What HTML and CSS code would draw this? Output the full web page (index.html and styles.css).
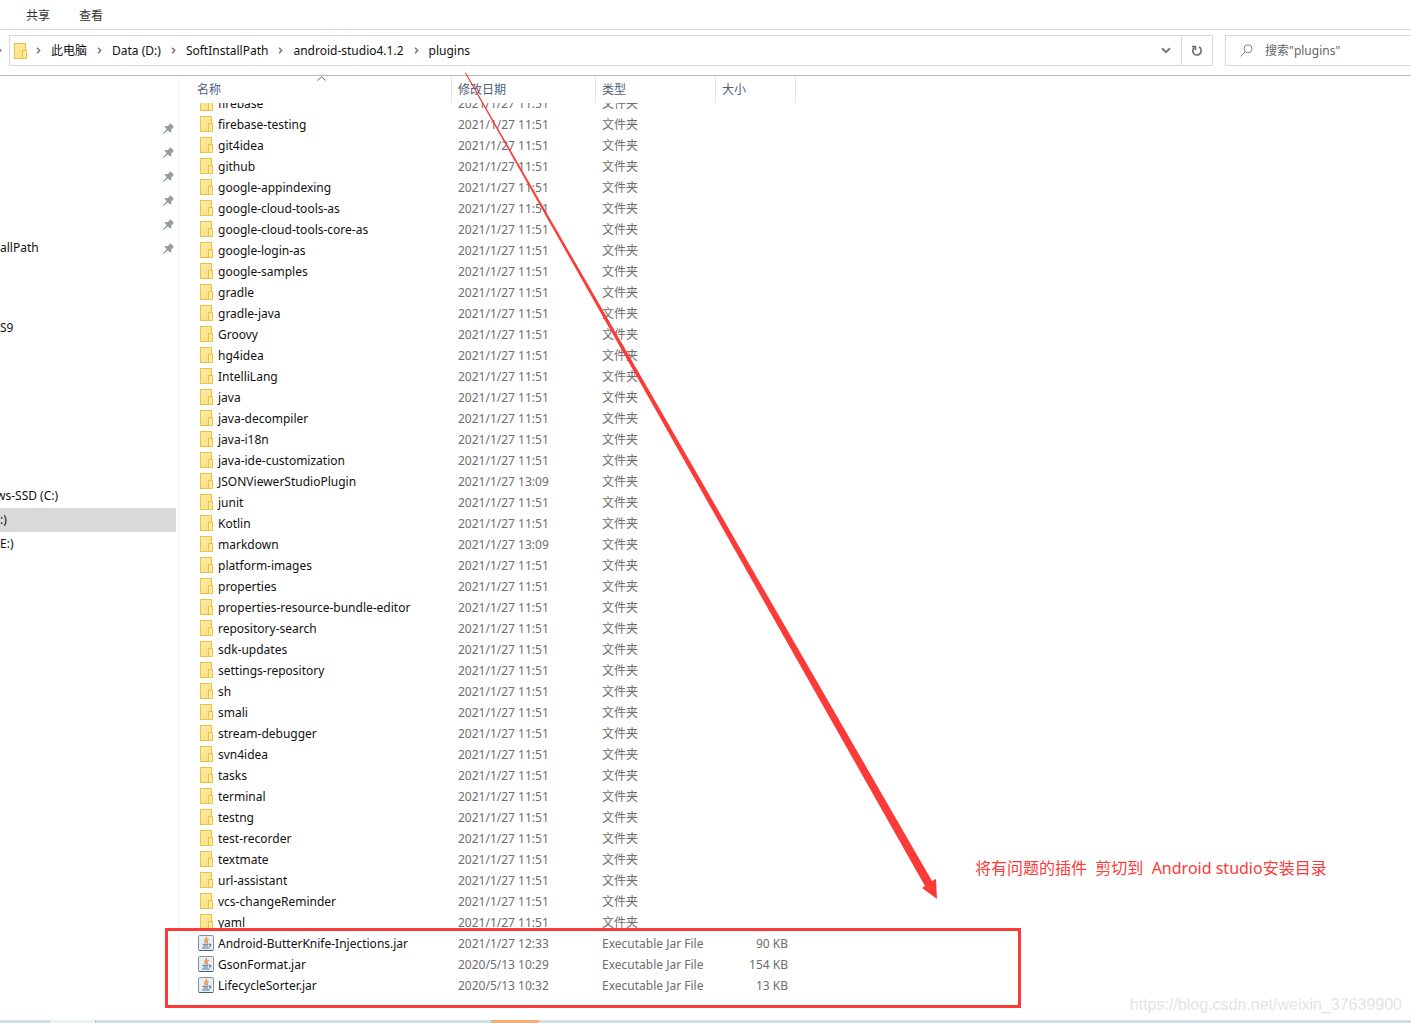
FILE: index.html
```html
<!DOCTYPE html>
<html lang="zh-CN">
<head>
<meta charset="utf-8">
<title>plugins</title>
<link rel="stylesheet" href="styles.css">
</head>
<body>
<svg class="symbols" aria-hidden="true">
  <symbol id="pin" viewBox="0 0 11 11"><path fill="#929ca5" d="M7 0 11 4 9.600 4.900 8.400 6.200 8.400 8.600 7.400 9.600 4.900 7.400 .8 10.800 0 10.900 .2 9.900 3.700 6.300 1.500 4 2.500 2.900 4.900 2.900 6.400 1.700Z"/></symbol>
  <symbol id="jar" viewBox="0 0 16 16">
    <rect x=".5" y=".5" width="15" height="15" rx="1" fill="#e9eef2" stroke="#7d93a3"/>
    <path d="M1 15.500H15" stroke="#44617a"/>
    <path d="M8.500 2c1 2-2.600 2.600-1.500 4.700.3.600.8.800.9 1.300M10.600 4.200c-1.800.9-2.200 1.500-1.400 2.600.4.600.1 1-.4 1.300" fill="none" stroke="#ee7d22" stroke-width="1.200"/>
    <path d="M4.500 9.200h6M5.300 11h4.600M4 13h7.500M11 9.200c2.300-.6 2.400 1.300.2 2.200" fill="none" stroke="#54748f" stroke-width="1.100"/>
  </symbol>
  <symbol id="chevron" viewBox="0 0 5 7"><path d="M1 .8 3.700 3.500 1 6.200" fill="none" stroke="#777" stroke-width="1.500"/></symbol>
</svg>

<nav class="tabs"><button>共享</button><button>查看</button></nav>

<div class="toolbar">
  <svg class="sep"><use href="#chevron"/></svg>
  <div class="address">
    <i class="folder"></i>
    <svg class="sep"><use href="#chevron"/></svg><a href="#">此电脑</a>
    <svg class="sep"><use href="#chevron"/></svg><a href="#">Data (D:)</a>
    <svg class="sep"><use href="#chevron"/></svg><a href="#">SoftInstallPath</a>
    <svg class="sep"><use href="#chevron"/></svg><a href="#">android-studio4.1.2</a>
    <svg class="sep"><use href="#chevron"/></svg><a href="#">plugins</a>
    <button class="history" aria-label="历史"><svg width="10" height="7" viewBox="0 0 10 7"><path d="M1 1.200 5 5.200 9 1.200" fill="none" stroke="#777" stroke-width="2"/></svg></button>
    <button class="refresh" aria-label="刷新"><svg width="12" height="12" viewBox="0 0 12 12"><path d="M3.200 2.600A4.200 4.200 0 1 0 8.600 2.500M1 1.500H4.500V5M9.800 3 8 2" fill="none" stroke="#6d6d6d" stroke-width="1.600"/></svg></button>
  </div>
  <label class="search"><svg width="13" height="13" viewBox="0 0 13 13"><path d="M5 8 .6 12.400" stroke="#888" fill="none"/><circle cx="8" cy="4.800" r="4" fill="none" stroke="#888"/></svg><input type="text" aria-label="搜索" placeholder="搜索&quot;plugins&quot;"></label>
</div>

<div class="content">
  <aside class="sidebar">
    <ul class="pinned">
      <li><svg><use href="#pin"/></svg></li>
      <li><svg><use href="#pin"/></svg></li>
      <li><svg><use href="#pin"/></svg></li>
      <li><svg><use href="#pin"/></svg></li>
      <li><svg><use href="#pin"/></svg></li>
      <li><a href="#">allPath</a><svg><use href="#pin"/></svg></li>
    </ul>
    <ul class="devices"><li><a href="#">S9</a></li></ul>
    <ul class="drives">
      <li class="cut"><a href="#">ws-SSD (C:)</a></li>
      <li class="selected"><a href="#">:)</a></li>
      <li><a href="#">E:)</a></li>
    </ul>
  </aside>
  <main class="files">
    <table class="columns">
      <thead><tr><th class="name">名称<svg class="sort" width="9" height="5" viewBox="0 0 9 5"><path d="M.5 4.500 4.500 .8 8.500 4.500" fill="none" stroke="#666"/></svg></th><th class="date">修改日期</th><th class="type">类型</th><th class="size">大小</th></tr></thead>
    </table>
    <div class="scroll">
    <table class="rows">
      <tbody>
        <tr><td class="name"><i class="folder"></i>firebase</td><td class="date">2021/1/27 11:51</td><td class="type">文件夹</td><td class="size"></td></tr>
        <tr><td><i class="folder"></i>firebase-testing</td><td>2021/1/27 11:51</td><td>文件夹</td><td></td></tr>
        <tr><td><i class="folder"></i>git4idea</td><td>2021/1/27 11:51</td><td>文件夹</td><td></td></tr>
        <tr><td><i class="folder"></i>github</td><td>2021/1/27 11:51</td><td>文件夹</td><td></td></tr>
        <tr><td><i class="folder"></i>google-appindexing</td><td>2021/1/27 11:51</td><td>文件夹</td><td></td></tr>
        <tr><td><i class="folder"></i>google-cloud-tools-as</td><td>2021/1/27 11:51</td><td>文件夹</td><td></td></tr>
        <tr><td><i class="folder"></i>google-cloud-tools-core-as</td><td>2021/1/27 11:51</td><td>文件夹</td><td></td></tr>
        <tr><td><i class="folder"></i>google-login-as</td><td>2021/1/27 11:51</td><td>文件夹</td><td></td></tr>
        <tr><td><i class="folder"></i>google-samples</td><td>2021/1/27 11:51</td><td>文件夹</td><td></td></tr>
        <tr><td><i class="folder"></i>gradle</td><td>2021/1/27 11:51</td><td>文件夹</td><td></td></tr>
        <tr><td><i class="folder"></i>gradle-java</td><td>2021/1/27 11:51</td><td>文件夹</td><td></td></tr>
        <tr><td><i class="folder"></i>Groovy</td><td>2021/1/27 11:51</td><td>文件夹</td><td></td></tr>
        <tr><td><i class="folder"></i>hg4idea</td><td>2021/1/27 11:51</td><td>文件夹</td><td></td></tr>
        <tr><td><i class="folder"></i>IntelliLang</td><td>2021/1/27 11:51</td><td>文件夹</td><td></td></tr>
        <tr><td><i class="folder"></i>java</td><td>2021/1/27 11:51</td><td>文件夹</td><td></td></tr>
        <tr><td><i class="folder"></i>java-decompiler</td><td>2021/1/27 11:51</td><td>文件夹</td><td></td></tr>
        <tr><td><i class="folder"></i>java-i18n</td><td>2021/1/27 11:51</td><td>文件夹</td><td></td></tr>
        <tr><td><i class="folder"></i>java-ide-customization</td><td>2021/1/27 11:51</td><td>文件夹</td><td></td></tr>
        <tr><td><i class="folder"></i>JSONViewerStudioPlugin</td><td>2021/1/27 13:09</td><td>文件夹</td><td></td></tr>
        <tr><td><i class="folder"></i>junit</td><td>2021/1/27 11:51</td><td>文件夹</td><td></td></tr>
        <tr><td><i class="folder"></i>Kotlin</td><td>2021/1/27 11:51</td><td>文件夹</td><td></td></tr>
        <tr><td><i class="folder"></i>markdown</td><td>2021/1/27 13:09</td><td>文件夹</td><td></td></tr>
        <tr><td><i class="folder"></i>platform-images</td><td>2021/1/27 11:51</td><td>文件夹</td><td></td></tr>
        <tr><td><i class="folder"></i>properties</td><td>2021/1/27 11:51</td><td>文件夹</td><td></td></tr>
        <tr><td><i class="folder"></i>properties-resource-bundle-editor</td><td>2021/1/27 11:51</td><td>文件夹</td><td></td></tr>
        <tr><td><i class="folder"></i>repository-search</td><td>2021/1/27 11:51</td><td>文件夹</td><td></td></tr>
        <tr><td><i class="folder"></i>sdk-updates</td><td>2021/1/27 11:51</td><td>文件夹</td><td></td></tr>
        <tr><td><i class="folder"></i>settings-repository</td><td>2021/1/27 11:51</td><td>文件夹</td><td></td></tr>
        <tr><td><i class="folder"></i>sh</td><td>2021/1/27 11:51</td><td>文件夹</td><td></td></tr>
        <tr><td><i class="folder"></i>smali</td><td>2021/1/27 11:51</td><td>文件夹</td><td></td></tr>
        <tr><td><i class="folder"></i>stream-debugger</td><td>2021/1/27 11:51</td><td>文件夹</td><td></td></tr>
        <tr><td><i class="folder"></i>svn4idea</td><td>2021/1/27 11:51</td><td>文件夹</td><td></td></tr>
        <tr><td><i class="folder"></i>tasks</td><td>2021/1/27 11:51</td><td>文件夹</td><td></td></tr>
        <tr><td><i class="folder"></i>terminal</td><td>2021/1/27 11:51</td><td>文件夹</td><td></td></tr>
        <tr><td><i class="folder"></i>testng</td><td>2021/1/27 11:51</td><td>文件夹</td><td></td></tr>
        <tr><td><i class="folder"></i>test-recorder</td><td>2021/1/27 11:51</td><td>文件夹</td><td></td></tr>
        <tr><td><i class="folder"></i>textmate</td><td>2021/1/27 11:51</td><td>文件夹</td><td></td></tr>
        <tr><td><i class="folder"></i>url-assistant</td><td>2021/1/27 11:51</td><td>文件夹</td><td></td></tr>
        <tr><td><i class="folder"></i>vcs-changeReminder</td><td>2021/1/27 11:51</td><td>文件夹</td><td></td></tr>
        <tr><td><i class="folder"></i>yaml</td><td>2021/1/27 11:51</td><td>文件夹</td><td></td></tr>
        <tr><td><svg class="jar"><use href="#jar"/></svg>Android-ButterKnife-Injections.jar</td><td>2021/1/27 12:33</td><td>Executable Jar File</td><td>90 KB</td></tr>
        <tr><td><svg class="jar"><use href="#jar"/></svg>GsonFormat.jar</td><td>2020/5/13 10:29</td><td>Executable Jar File</td><td>154 KB</td></tr>
        <tr><td><svg class="jar"><use href="#jar"/></svg>LifecycleSorter.jar</td><td>2020/5/13 10:32</td><td>Executable Jar File</td><td>13 KB</td></tr>
      </tbody>
    </table>
    </div>
  </main>
</div>
<div class="taskbar"><span class="start"></span><span class="active"></span></div>

<svg class="arrow" width="480" height="830" viewBox="0 0 480 830" aria-hidden="true"><path fill="#fc3a38" d="M0 0H1L467 808 471 806 472 826 457 815 460 813Z"/><path d="M.5 0 90 157" stroke="#fc3a38" stroke-opacity=".6"/></svg>
<div class="frame"></div>
<p class="note">将有问题的插件&nbsp; 剪切到&nbsp; Android studio安装目录</p>
<p class="watermark">https://blog.csdn.net/weixin_37639900</p>
</body>
</html>
```
FILE: styles.css
```css
* { box-sizing: border-box; }

body {
  margin: 0;
  min-height: 100vh;
  display: flex;
  flex-direction: column;
  position: relative;
  overflow-x: hidden;
  background: #fff;
  color: #111;
  font: 12px/20px "Noto Sans", "Noto Sans CJK SC", sans-serif;
}

button, input { font: inherit; color: inherit; border: 0; padding: 0; background: none; }
a { color: inherit; text-decoration: none; }
ul { list-style: none; margin: 0; padding: 0; }
p { margin: 0; }
.symbols { position: absolute; width: 0; height: 0; }

.tabs {
  display: flex;
  gap: 29px;
  height: 30px;
  padding: 2px 0 0 26px;
  border-bottom: 1px solid #dcdcdc;
  color: #333;
}

.toolbar {
  display: flex;
  align-items: center;
  padding: 5px 0 9px;
  border-bottom: 1px solid #b9b9b9;
}
.sep { width: 5px; height: 7px; flex: none; }
.toolbar > .sep { margin-left: -3px; margin-right: 7px; }
.address {
  flex: 1;
  display: flex;
  align-items: center;
  height: 31px;
  padding-left: 4px;
  border: 1px solid #d9d9d9;
}
.address .sep { margin: 0 10px; }
.address .history { margin-left: auto; width: 30px; height: 29px; }
.address .refresh { width: 31px; height: 29px; border-left: 1px solid #d9d9d9; }
.address button svg { display: block; margin: auto; }
.search {
  display: flex;
  align-items: center;
  gap: 12px;
  width: 186px;
  height: 31px;
  margin-left: 12px;
  padding-left: 14px;
  border: 1px solid #d9d9d9;
  border-right: 0;
  color: #666;
}
.search input { width: 120px; outline: 0; }
.search input::placeholder { color: #666; opacity: 1; }

.folder {
  display: inline-block;
  flex: none;
  position: relative;
  width: 12px;
  height: 16px;
  border: 1px solid #e9c345;
  background: linear-gradient(135deg, #ffeaa5, #fcdf80);
}
.folder::after {
  content: "";
  position: absolute;
  right: -2px;
  bottom: -1px;
  width: 3px;
  height: 7px;
  border: 1px solid #e9c345;
  background: #ffeaa5;
}

.content { flex: 1; display: flex; }
.sidebar { width: 179px; padding-top: 40px; border-right: 1px solid #f2f2f2; margin-bottom: 24px; }
.sidebar li { display: flex; align-items: center; height: 24px; width: 176px; padding-right: 2px; }
.sidebar li svg { width: 11px; height: 11px; margin-left: auto; }
.devices { margin-top: 56px; }
.drives { margin-top: 144px; }
.cut { text-indent: -4px; }
.selected { background: #d9d9d9; }

.files { flex: 1; }
table { border-collapse: separate; border-spacing: 0; table-layout: fixed; width: 617px; }
th, td { padding: 0; text-align: left; font-weight: 400; white-space: nowrap; }
.name { width: 273px; }
.date { width: 144px; }
.type { width: 120px; }
.size { width: 80px; }
.columns th {
  position: relative;
  height: 27px;
  padding-left: 6px;
  border-right: 1px solid #e5e5e5;
  color: #4c607a;
}
.columns .name { padding-left: 18px; }
.sort { position: absolute; left: 138px; top: 0; }

.scroll { overflow: hidden; }
.rows { margin-top: -10px; }
.rows td { height: 21px; padding-left: 6px; color: #6d6d6d; }
.rows td:first-child { padding-left: 21px; color: #111; }
.rows td:last-child { padding: 0 8px 0 0; text-align: right; }
.rows .folder { vertical-align: middle; margin: -2px 6px 0 0; }
.jar { width: 16px; height: 16px; vertical-align: middle; margin: -2px 4px 0 -2px; }

.taskbar { display: flex; height: 3px; background: #cde0e5; }
.start { width: 46px; margin-left: 50px; border-right: 1px solid #a9c6cc; background: #eaf4f5; }
.active { width: 48px; margin-left: 395px; background: #f5ae79; }

/* annotations drawn over the window */
.arrow { position: absolute; left: 465px; top: 73px; }
.frame { position: absolute; left: 165px; top: 928px; width: 856px; height: 80px; border: 3px solid #fc3a38; }
.note { position: absolute; left: 975px; top: 856px; font-size: 16px; line-height: 24px; color: #fc3a38; white-space: nowrap; }
.watermark { position: absolute; right: 9px; top: 995px; font: 16px/20px "Liberation Sans", sans-serif; color: #e4e4e4; }
```
